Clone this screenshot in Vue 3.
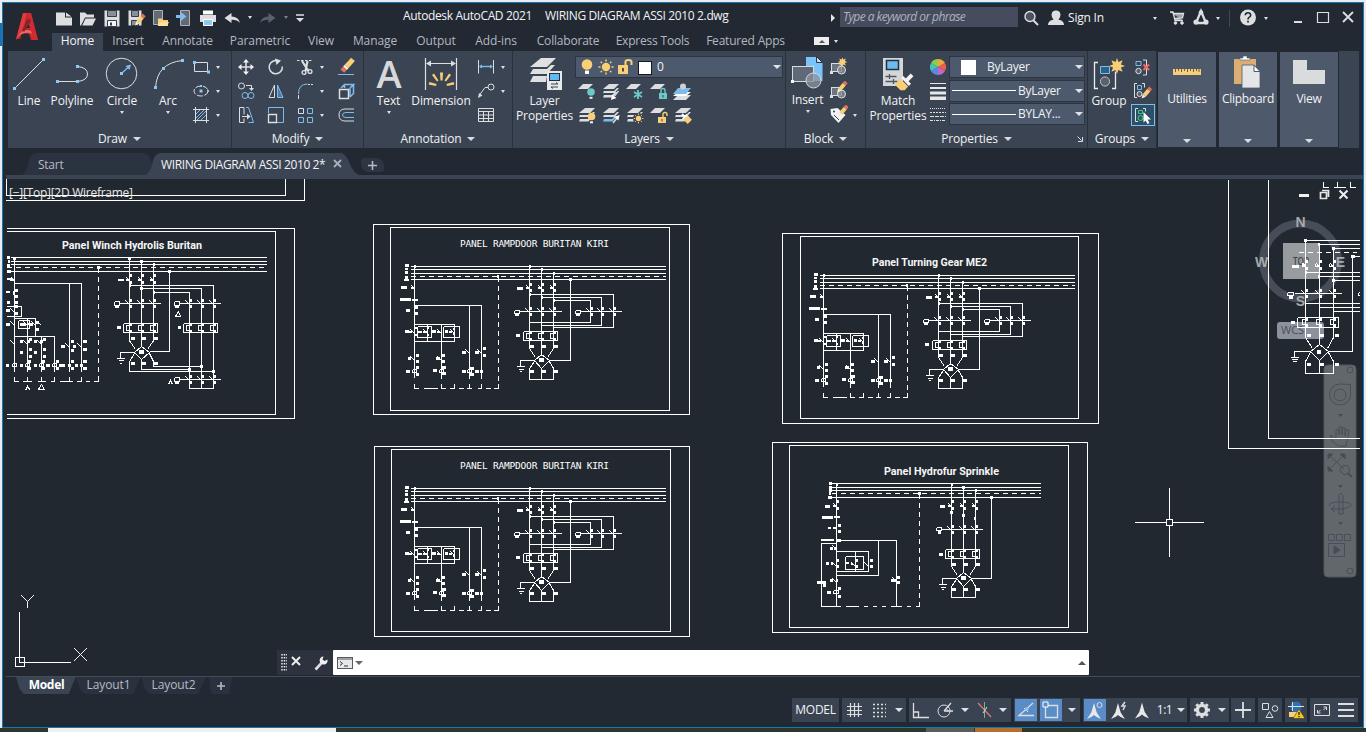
<script setup>
import { h } from 'vue'

const W = '#dcdee0'
const B = '#7cbdee'
const Y = '#f8cf76'
const dot = (x, y, s = 3) => `<rect x="${x - s / 2}" y="${y - s / 2}" width="${s}" height="${s}" fill="#8cc8f2" stroke="none"/>`
const slab = (x, y, f = W, w = 10, hh = 4) => `<path d="M${x + 5} ${y}h${w - 3}l-5 ${hh}h-${w - 3}z" fill="${f}" stroke="none"/>`
const sheets = (f1 = W, f2 = W, f3 = W) => `<g stroke="none"><path d="M8 2h10l-5 5H2z" fill="${f1}"/><path d="M3 9h10l3-3h2l-4.500 5H2z" fill="${f2}"/><path d="M3 13h8l3-3h2l-4.500 5.500H2z" fill="${f3}"/></g>`
const pencil = (x, y) => `<g transform="translate(${x} ${y}) rotate(40)" stroke="none"><rect x="-2" y="-8" width="4" height="3" fill="#e4705c"/><rect x="-2" y="-5" width="4" height="7" fill="${Y}"/><path d="M-2 2h4l-2 4z" fill="#f4eee0"/></g>`
const star = (x, y, s = 1) => `<path transform="translate(${x} ${y}) scale(${s})" d="M0-8l1.400 4 4.200-1.800L3.900-1.500 8 0 3.900 1.500 5.600 5.800 1.400 4 0 8-1.400 4-5.600 5.800-3.900 1.500-8 0-3.900-1.500-5.600-5.800-1.400-4z" fill="${Y}" stroke="none"/>`
const lockIcon = (x, y, f, open) => `<rect x="${x}" y="${y}" width="8" height="6" fill="${f}" stroke="none"/><path d="M${open ? x + 5 : x + 2} ${y}v-2.500q0-2 2-2t2 2v${open ? 1.5 : 2.5}" stroke="${f}" stroke-width="1.400"/><path d="M${x + 4} ${y + 2}v2.500" stroke="#3b4453"/>`
const bulb = (x, y, f) => `<circle cx="${x}" cy="${y}" r="3.800" fill="${f}" stroke="none"/><path d="M${x - 1.5} ${y + 4.8}h3v2h-3z" fill="#eee" stroke="none"/>`
const sun = (x, y, s = 1) => `<g transform="translate(${x} ${y}) scale(${s})" stroke="${Y}"><circle r="4.200" fill="${Y}" stroke="none"/><path stroke-width="1.500" d="M0-7.500v2M0 5.500v2M-7.500 0h2M5.500 0h2M-5.300-5.300l1.300 1.300M4 4l1.300 1.300M-5.300 5.300l1.300-1.300M4-4l1.300-1.300"/></g>`
const blk = `<rect x="3.500" y="6.500" width="10" height="8" fill="#6d7580"/><circle cx="13.500" cy="13" r="4" fill="#858c95" fill-opacity=".8"/><path d="M2 14h3v3h-3z" fill="${W}" stroke="none"/>`
const needle = `<path d="M0-8l2.700 9.500 4.300 6.500-4.800-2.200L0 4l-2.200 1.800L-7 8l4.300-6.500z" fill="#e6e8ea" stroke="none"/>`

const icons = {
  logo: [26, 32, `<g stroke="none"><path d="M9 3h8l7 27h-7l-2-6-7-1-2 6H2z" fill="#b52b30"/><path d="M9 3h4l-5 20-6 7z" fill="#e0393e"/><path d="M13 3h4l7 27h-6z" fill="#d12a32"/><path d="M13 10l3 8h-6z" fill="#222933"/><path d="M5 25q5-7 12-4l1 3q-8-4-16 5z" fill="#ee6a62"/><path d="M8 20l7-12 2 3-7 11z" fill="#8b2428"/></g>`],
  newf: [20, 20, `<path d="M2 4.500h9v5h7v8H2zM12 4.500l5.500 4h-5.500z" fill="${W}" stroke="none"/>`],
  open: [20, 20, `<path d="M2 4.500h5l2 2h7v3H7l-4 8H2zM7.500 10.500H18l-3.500 7H4.200z" fill="${W}" stroke="none"/>`],
  save: [20, 20, `<path d="M2.500 2.500h15v16h-15z" fill="${W}" stroke="none"/><path d="M5.500 2.500h9v6h-9z" fill="#8a8f96" stroke="#333b48"/><path d="M5.500 12.500h9v6h-9z" fill="#f4f4f4" stroke="#333b48"/><path d="M9 14.500v3" stroke="#333b48" stroke-width="2"/>`],
  saveas: [20, 20, `<path d="M2.500 2.500h13v15h-13z" fill="${W}" stroke="none"/><path d="M5.500 2.500h7v6h-7zM5.500 12.500h7v5h-7z" fill="#8a8f96" stroke="#333b48"/>` + pencil(13, 13)],
  mopen: [20, 20, `<path d="M3.500 2.500h9v14h-9z" fill="#626a75" stroke="#aeb2b8"/><path d="M8 10.500h4l1 1.500h5v6H8z" fill="${Y}" stroke="none"/><path d="M10 14h9l-2 4H8z" fill="#ffe0a0" stroke="none"/>`],
  msave: [20, 20, `<path d="M6.500 2.500h9v15h-9z" fill="#626a75" stroke="#aeb2b8"/><path d="M2 7h5V4l5.500 4.500L7 13v-3H2z" fill="${B}" stroke="none"/>`],
  print: [20, 20, `<path d="M5 2.500h10v4H5z" fill="#fff" stroke="none"/><path d="M2 7h16v7H2z" fill="${W}" stroke="none"/><path d="M5.500 11.500h9v6h-9z" fill="#8cc8f2" stroke="#fff"/>`],
  undo: [20, 20, `<path d="M2.500 10l7-5v3.500q7 0 8.500 6.500-3-3.500-8.500-3.200V15z" fill="${W}" stroke="none"/>`],
  redo: [20, 20, `<path d="M17.500 10l-7-5v3.500q-7 0-8.500 6.500 3-3.500 8.500-3.200V15z" fill="#59616d" stroke="none"/>`],
  more: [12, 12, `<path d="M2 3h8" stroke-width="1.500"/><path d="M2 6h8l-4 4z" fill="${W}" stroke="none"/>`],
  find: [20, 20, `<circle cx="9" cy="8.500" r="5" fill="#4a5360" stroke-width="1.400"/><path d="M12.500 12.500l4.500 4.500" stroke-width="2"/>`],
  user: [20, 20, `<path d="M2 17q0-4.500 5.500-5.200Q5.500 9.500 5.500 6.500 6 2.500 10 2.500t4.500 4q0 3-2 5.300Q18 12.500 18 17z" fill="${W}" stroke="none"/>`],
  cart: [20, 20, `<path d="M3 4h3l2 8.500h8M6.500 5.500h10l-1 4.500-8 .5z" fill="#9aa0a8" stroke-width="1.300"/><circle cx="8.500" cy="15" r="1.300" fill="${W}"/><circle cx="15" cy="15" r="1.300" fill="${W}"/>`],
  adsk: [20, 20, `<path d="M10 3L5 15h10z" stroke-width="2.300"/><circle cx="10" cy="4.500" r="2.300" fill="${W}" stroke="none"/><circle cx="5" cy="14" r="2.600" fill="${W}" stroke="none"/><circle cx="15" cy="14" r="2.600" fill="${W}" stroke="none"/>`],
  help: [20, 20, `<circle cx="10" cy="9.500" r="8" fill="${W}" stroke="none"/><path d="M7.300 7.300q.2-2.500 2.700-2.500t2.700 2.300q0 1.500-1.600 2.300-1.100.6-1.100 2" stroke="#222933" stroke-width="1.600"/><path d="M9.100 12.700h1.800v1.800H9.100z" fill="#222933" stroke="none"/>`],
  min: [20, 20, `<path d="M6 14h8" stroke-width="2"/>`],
  max: [20, 20, `<path d="M4.500 4.500h11v10h-11z" stroke-width="1.200"/>`],
  close: [20, 20, `<path d="M5 4l10 10M15 4l-10 10" stroke-width="1.800"/>`],
  line: [36, 36, `<path d="M3.500 32.500l29-29"/>` + dot(3.5, 32.5) + dot(32.5, 3.5)],
  pline: [36, 36, `<path d="M3.500 25.500h20q10-1 10-7.500t-10-7.500"/>` + dot(3.5, 25.5) + dot(23.5, 25.5) + dot(23.5, 10.5)],
  circle: [36, 36, `<circle cx="17.500" cy="17.500" r="15.300"/><path d="M18 17l7-6.500" stroke="${B}" stroke-width="1.300"/><path d="M27 8.500l-1.500 5.500-4-4z" fill="${B}" stroke="none"/>` + dot(17.5, 17.5)],
  arc: [36, 36, `<path d="M5.500 32Q7 7 32.500 4.500"/>` + dot(5.5, 31.5) + dot(13.5, 12.5) + dot(32.5, 4.5)],
  rect: [20, 20, `<path d="M3.500 5.500h13v9h-13z"/>` + dot(3.5, 5.5) + dot(17.5, 15, 3)],
  ellipse: [20, 20, `<ellipse cx="10" cy="10" rx="7" ry="5" stroke-dasharray="6 1.500"/>` + dot(10, 10) + dot(17, 10, 2) + dot(10, 5, 2)],
  hatch: [20, 20, `<path d="M5 9l4-4M5 13l8-8M6 15l9-9M10 15l5-5" stroke="${B}"/><path d="M4.500 2v16M15.500 2v16M2 4.500h16M2 15.500h16"/>`],
  move: [20, 20, `<path d="M10 4v12M4 10h12" stroke-width="1.600"/><path d="M10 2l3 3.500H7zM10 18l3-3.500H7zM2 10l3.500-3v6zM18 10l-3.500-3v6z" fill="#f2f2f2" stroke="none"/>`],
  rotate: [20, 20, `<path d="M12.500 4.200A6.600 6.600 0 1 0 16.300 9.500" stroke-width="1.500"/><path d="M9 1.500l6 2-4.500 4.500z" fill="${W}" stroke="none"/>`],
  trim: [20, 20, `<path d="M2 3.500h16" stroke-dasharray="2.500 1.500"/><path d="M7 4l6.500 10M12.500 4l-2 10" stroke-width="2.200"/><circle cx="9" cy="15.500" r="1.900" stroke-width="1.400"/><circle cx="15" cy="14.500" r="1.900" stroke-width="1.400"/>`],
  erase: [20, 20, `<g transform="translate(11 9) rotate(42)" stroke="none"><rect x="-2.500" y="-9" width="5" height="10" fill="${Y}"/><rect x="-2.500" y="1" width="5" height="2" fill="#fff"/><rect x="-2.500" y="3" width="5" height="4" fill="#ee6d61"/></g><path d="M2 17.500h16" stroke="${B}"/>`],
  copy: [20, 20, `<circle cx="5.500" cy="5" r="3"/><path d="M10 4.500h5.500V7"/><path d="M15.500 10l-2.500-3h5z" fill="${W}" stroke="none"/><g stroke="${B}"><circle cx="9" cy="14.500" r="3"/><circle cx="15" cy="14.500" r="3"/></g>`],
  mirror: [20, 20, `<path d="M8.500 4v12.500h-5.500z"/><path d="M11.500 4v12.500H17z" fill="#4f7ba3" stroke="${B}"/>`],
  fillet: [20, 20, `<path d="M3.500 18v-4"/><path d="M3.500 13q0-10 9-10" stroke="${B}"/><path d="M13 3.500h5" stroke-dasharray="2 1"/>`],
  explode: [20, 20, `<path d="M3.500 8.500h9v9h-9z" stroke-width="1.500"/><path d="M5 7l3.500-3.500h9L14 7M17.500 4v8.500L14 16M14 7v9M8.500 4v3" stroke="${B}" stroke-width="1.500"/>`],
  stretch: [20, 20, `<path d="M8 2.500H3.500v15H8M8 2.500v7M8 13.500v4"/><path d="M10 2.500h2.500l5 15h-5" stroke="${B}"/><path d="M6 11.500h6"/><path d="M11 8.500l3.500 3-3.500 3z" fill="${W}" stroke="none"/>`],
  scale: [20, 20, `<path d="M2.500 8V2.500h15v15H11" stroke="${B}"/><path d="M2.500 9.500h8v8h-8z" stroke-width="1.300"/>`],
  array: [20, 20, `<path d="M3.500 3.500h5v5h-5z"/><path d="M12.500 3.500h5v5h-5zM3.500 12.500h5v5h-5zM12.500 12.500h5v5h-5z" stroke="${B}"/>`],
  offset: [20, 20, `<path d="M18 4H9Q3 4 3 10t6 6h9"/><path d="M18 7.500h-8q-3.500 0-3.500 2.500t3.500 2.500h8" stroke="${B}"/>`],
  text: [36, 36, `<text x="18" y="32" text-anchor="middle" font-family="Open Sans, sans-serif" font-weight="600" font-size="38" fill="#d6d8da" stroke="none">A</text>`],
  dim: [36, 36, `<path d="M2.500 2v32M33.500 2v32M4 7.500h28" stroke-width="1.200"/><path d="M3 7.500l5-3v6zM33 7.500l-5-3v6z" fill="${W}" stroke="none"/><path d="M17 16.500h3l-.5 8h-2zM9 19l2-1.500 4.500 7-1.500 1zM28 19l-2-1.500-4.500 7 1.500 1zM5.500 28.500l1-2.500 7 2-.5 2zM31.500 28.500l-1-2.500-7 2 .5 2z" fill="${Y}" stroke="none"/>`],
  dlin: [20, 20, `<path d="M2.500 3v13.500M17.500 3v13.500"/><path d="M4 9.500h12" stroke="${B}" stroke-width="1.400"/><path d="M3 9.500l3-2v4zM17 9.500l-3-2v4z" fill="${B}" stroke="none"/>`],
  leader: [20, 20, `<circle cx="15" cy="6" r="3"/><path d="M12 6.500H9L3.500 14"/><path d="M2 17l1-5 3.500 2.500z" fill="${W}" stroke="none"/>`],
  table: [20, 20, `<path d="M2.500 3.500h15v13h-15zM2.500 6.500h15M2.500 10h15M2.500 13.500h15M7.500 6.500v10M12.500 6.500v10"/>`],
  layerp: [36, 36, `<g fill="#dfe0e1" stroke="none"><path d="M14 2h15l-9 9H3z"/><path d="M6 13h14l4-4h4l-8 9H3zM6 20h14l-1 6H3z"/></g><rect x="20.500" y="15.500" width="14" height="18" fill="#e8e9ea" stroke="#e8e9ea"/><rect x="22.500" y="17.500" width="10" height="7" fill="#62b8f0" stroke="#26303c"/><path d="M24 28h7l-2-1.500M31 31h-7l2 1.500" stroke="#3b4453"/>`],
  bulb: [20, 20, `<circle cx="10" cy="7.500" r="5.300" fill="${Y}" stroke="none"/><path d="M8 13.500h4v3.500H8z" fill="#fff" stroke="none"/>`],
  sun: [20, 20, sun(10, 10)],
  unlock: [20, 20, `<path d="M3 8h10v9H3z" fill="${Y}" stroke="none"/><path d="M10.500 8V4.500q0-1.500 3-1.500t3 2V8" stroke="${Y}" stroke-width="2"/><path d="M8 11v3.500" stroke="#443c28" stroke-width="1.800"/>`],
  l1: [20, 20, slab(1, 2, W, 13, 5) + bulb(14, 10, '#6cc9c4')],
  l2: [20, 20, sheets() + `<path d="M17.500 9l-4 5" stroke-width="1.400"/><path d="M10 18l1-5.500 4.500 3.500z" fill="#fff" stroke="none"/>`],
  l3: [20, 20, slab(1, 2, W, 13, 5) + `<path d="M13 8v9M9 10l8 5M17 10l-8 5" stroke="#6cc9c4" stroke-width="1.800"/>`],
  l4: [20, 20, slab(1, 2, W, 13, 5) + lockIcon(10, 11, '#6cc9c4')],
  l5: [20, 20, slab(0, 13, W, 16, 5) + slab(0, 10, '#fff', 16, 4) + slab(0, 6, B, 16, 6) + `<circle cx="10" cy="4.500" r="3" fill="#cfd1d3" stroke="none"/>`],
  l6: [20, 20, sheets() + bulb(14.5, 10.5, Y)],
  l7: [20, 20, sheets(W, W, B) + `<path d="M12 17l4-5" stroke-width="1.400"/><path d="M18.500 9l-1 5.500-4.500-3.500z" fill="#fff" stroke="none"/>`],
  l8: [20, 20, sheets() + `<circle cx="13.500" cy="12.500" r="5.500" fill="#3b4453" stroke="none"/>` + sun(13.5, 12.5, 0.65)],
  l9: [20, 20, slab(1, 2, W, 13, 5) + lockIcon(9, 11, Y, true)],
  l10: [20, 20, sheets() + `<g transform="translate(14 13) rotate(-45)" stroke="none"><rect x="-3" y="-2" width="6" height="6" fill="${Y}"/><rect x="-3" y="-4" width="6" height="2" fill="#fff"/><rect x="-1" y="-7" width="2" height="4" fill="#fff"/></g>`],
  insert: [36, 36, `<path d="M16 1h10l6.500 6v18H16z" fill="#7cc4f8" stroke="none"/><path d="M26.500 .5v6h6z" fill="#bfe2fb" stroke="#2b3340"/><rect x="2.500" y="10.500" width="21" height="15" fill="#606978" stroke="#d8dadd"/><circle cx="23.500" cy="24.500" r="7.500" fill="#8c939d" fill-opacity=".75" stroke="#d8dadd"/><path d="M1 24h3v3H1z" fill="#fff" stroke="none"/>`],
  bcreate: [20, 20, blk + star(14.5, 5, 0.6)],
  bedit: [20, 20, blk + pencil(13, 7)],
  battr: [20, 20, `<path d="M2.500 4l7-1 8 7-7 8-7.500-8z" fill="#f2f2f2" stroke="none"/><circle cx="6" cy="6.500" r="1" fill="#3b4453" stroke="none"/><path d="M6 10l5 5" stroke="#3b4453"/>` + pencil(14, 7)],
  match: [36, 36, `<path d="M3 2h20v28H3z" fill="#d5d6d8" stroke="none"/><path d="M6.500 4.500h12v9h-12z" fill="#6cbcf4" stroke="#26303c" stroke-width="1.500"/><path d="M5.500 20.500h11M5.500 25.500h12M9.500 18v5M13.500 23v5" stroke="#505762" stroke-width="1.300"/><g transform="translate(25 26) rotate(45)" stroke="none"><rect x="-5.500" y="-3" width="11" height="3" fill="#f4f4f4"/><rect x="-2" y="-10" width="4" height="8" fill="#f4f4f4"/><path d="M-5.500 1h11v5l-3 3h-8z" fill="${Y}"/></g>`],
  wheel: [20, 20, [['#f0a63c', 0], ['#e9604e', 60], ['#c765c0', 120], ['#5e85e8', 180], ['#45c5b5', 240], ['#8fca55', 300]].map(([f, a]) => `<path transform="rotate(${a} 10 10)" d="M10 10V2A8 8 0 0 1 16.930 6z" fill="${f}" stroke="none"/>`).join('')],
  lw: [20, 20, `<g stroke="none" fill="#e6e7e8"><path d="M2 2h16v1H2zM2 6h16v2H2zM2 10.500h16v3H2zM2 15.500h16v3.500H2z"/></g>`],
  lt: [20, 20, `<path d="M2 3.500h16" stroke-dasharray="1 1"/><path d="M2 7.500h16" stroke-dasharray="2 1"/><path d="M2 11.500h16" stroke-dasharray="4 1"/><path d="M2 15.500h16" stroke-dasharray="3 1 1 1"/>`],
  group: [36, 36, `<path d="M7 6.500H3.500v26H7M21 32.500h3.500v-17" stroke="#e8eaec" stroke-width="1.300"/><path d="M9.500 10.500h9v7h-9z" fill="#2d6286" stroke="${B}"/><circle cx="14" cy="25.500" r="4.600" fill="#59616d" stroke="#bfc3c8"/>` + star(26, 10)],
  ungroup: [20, 20, `<path d="M10 3h3.500v15H10"/><path d="M3 4.500h5v4H3z" stroke="${B}"/><circle cx="5.500" cy="14" r="2.700" fill="#59616d"/><path d="M10.500 7.500L16 13M16 7.500L10.500 13" stroke="#f06a66" stroke-width="2"/>`],
  gedit: [20, 20, `<path d="M4 2.500H1.500v14H4M9 2.500h2.500v4"/><path d="M4.500 4.500h4v4h-4z" stroke="${B}"/><circle cx="6.500" cy="13" r="2.500" fill="#59616d"/>` + pencil(12.5, 13)],
  gsel: [20, 20, `<path d="M5 3.500H2.500v13H5M10 3.500h2.500v3"/><path d="M5.500 5.500h4v3h-4z" stroke="#4cc38a"/><circle cx="7.500" cy="13" r="2.500" stroke="#4cc38a" fill="#22664e"/><path d="M10.500 7l7.500 7.500h-3.500l2 3.500-2 1-1.800-3.500-2.200 2z" fill="#fff" stroke="none"/>`],
  util: [36, 36, `<path d="M4 15h28v6H4z" fill="${Y}" stroke="none"/><path d="M6.500 15v3M9.500 15v2M12.500 15v3M15.500 15v2M18.500 15v3M21.500 15v2M24.500 15v3M27.500 15v2M30 15v3" stroke="#5b5340" stroke-width=".9"/>`],
  clip: [36, 36, `<path d="M4 5h22v25H4z" fill="#dcae73" stroke="none"/><path d="M10 6V4h3V2h4v2h3v2z" fill="#fff" stroke="#4e5a6c" stroke-width=".6"/><path d="M12 11h12l6 6v17H12z" fill="#e4e5e6" stroke="#4e5a6c" stroke-width=".8"/><path d="M24 11l6 6.500h-6z" fill="#fff" stroke="#4e5a6c"/>`],
  view: [36, 36, `<path d="M2 6h14v10h18v14H2z" fill="#dadbdd" stroke="none"/>`],
  launch: [8, 8, `<path d="M1.500 1.500l4 4M6.500 2v4.500H2"/>`],
  grid: [20, 20, `<path d="M6.500 3v14M10.500 3v14M14.500 3v14M3 6.500h15M3 10.500h15M3 14.500h15" stroke-width="1.200"/>`],
  snap: [20, 20, `<path d="M4 4.500h13M4 8.500h13M4 12.500h13M4 16.500h13" stroke-dasharray="2 2" stroke-width="1.700"/>`],
  ortho: [20, 20, `<path d="M2.500 3v14.500H18M2.500 12h5v5" stroke-width="1.300"/>`],
  polar: [20, 20, `<circle cx="9" cy="11" r="6"/><path d="M9 11h9M9 11l7-8" stroke-width="1.300"/><path d="M11 8.500q2 1 1.500 3"/>`],
  iso: [20, 20, `<path d="M4 3l13 14" stroke="#e07a7a" stroke-width="1.200"/><path d="M10.500 2v16" stroke="#74b884"/><path d="M9 13l4-6"/>`],
  track: [20, 20, `<path d="M17 3L3 15.500h15" stroke-width="1.300"/><path d="M8 8l4 4" />` + dot(11, 9, 3)],
  osnap: [20, 20, `<path d="M4.500 5.500h12v12h-12z" stroke-width="1.300"/><path d="M2 2h5v5H2z" fill="#5a8cc8" stroke="#fff"/>`],
  ann1: [20, 20, `<g transform="translate(9 11)">${needle}</g><circle cx="14.500" cy="5" r="2.500"/>`],
  ann2: [20, 20, `<g transform="translate(9 11)">${needle}</g><path d="M16 2l-3 4h3l-2 4" stroke-width="1.500"/>`],
  ann3: [20, 20, `<g transform="translate(10 10.500)">${needle}</g>`],
  gear: [20, 20, `<circle cx="10" cy="10" r="4.600" stroke-width="3.400"/><path d="M10 2v3M10 15v3M2 10h3M15 10h3M4.300 4.300l2 2M13.700 13.700l2 2M4.300 15.700l2-2M13.700 6.300l2-2" stroke-width="3"/>`],
  plus: [20, 20, `<path d="M10 2v16M2 10h16" stroke-width="1.800"/>`],
  iso2: [20, 20, `<path d="M2.500 3.500h6v6h-6zM9.500 11.500l3.500 6H6z"/><circle cx="15" cy="8.500" r="2.800"/>`],
  hw: [20, 20, `<circle cx="10" cy="7" r="5.500" fill="#2f6fb4" stroke="none"/><path d="M2 6.500h16M6.500 2v9" stroke-width="1"/><path d="M3 12h9v5H3z" fill="${Y}" stroke="none"/><path d="M13 9l6 9.500H7z" fill="#f6c51e" stroke="#22282f" stroke-width=".5"/><path d="M13 12v3M13 16v1.300" stroke="#222" stroke-width="1.300"/>`],
  full: [20, 20, `<path d="M2.500 4.500h15v11h-15z"/><path d="M6 12.500l2.500-2.500M14 7.500L11.500 10M5.500 10v3h3M14.500 10V7h-3"/>`],
  menu: [20, 20, `<path d="M2 4h16M2 10h16M2 16h16" stroke-width="2"/>`],
  wrench: [16, 16, `<path d="M2.500 14.500l7-7.500" stroke-width="2.600"/><path d="M14.500 4.500a4 4 0 1 1-4-3l-1 3 2 1.500z" fill="#f0f0f0" stroke="none"/>`],
  cmd: [16, 14, `<rect x=".500" y="1.500" width="15" height="11" fill="#e6e7e9" stroke="#555b63"/><path d="M.500 3h15" stroke="#555b63"/><path d="M3 5.500l2.500 2L3 9.500M7 10h4" stroke="#333"/>`],
}

const Ic = (p) => {
  const [w, ht, m] = icons[p.n]
  return h('svg', { width: w, height: ht, viewBox: `0 0 ${w} ${ht}`, fill: 'none', stroke: W, 'stroke-width': 1, innerHTML: m })
}
Ic.props = ['n']

const quick = ['newf', 'open', 'save', 'saveas', 'mopen', 'msave', 'print', 'undo']
const tabs = ['Home', 'Insert', 'Annotate', 'Parametric', 'View', 'Manage', 'Output', 'Add-ins', 'Collaborate', 'Express Tools', 'Featured Apps']
const drawBig = [['Line', 'line'], ['Polyline', 'pline'], ['Circle', 'circle', 1], ['Arc', 'arc', 1]]
const modify = [['move'], ['rotate'], ['trim', 1], ['erase'], ['copy'], ['mirror'], ['fillet', 1], ['explode'], ['stretch'], ['scale'], ['array', 1], ['offset']]
const slim = [['Utilities', 'util'], ['Clipboard', 'clip'], ['View', 'view']]

/* Schematic geometry is listed on a grid of thirds of a drawing unit. */
const nums = (s) => s.split(';').map((q) => q.trim().split(/\s+/).map(Number)).filter((q) => q.length > 1)
const snapTo = (v, o) => Math.floor(v / 3) + o + 0.5
const wires = (s, ox, oy) => nums(s).map((q) => {
  let d = ''
  for (let i = 0; i < q.length; i += 2) d += (i ? 'L' : 'M') + snapTo(q[i], ox) + ' ' + snapTo(q[i + 1], oy)
  return d
}).join('')
const blobs = (s, ox, oy) => nums(s).map(([x, y, w = 12, k = 9]) => {
  const bw = Math.max(1, Math.round(w / 3))
  const bh = Math.max(1, Math.round(k / 3))
  return `M${Math.round((x - w / 2) / 3) + ox} ${Math.round((y - k / 2) / 3) + oy}h${bw}v${bh}h-${bw}z`
}).join('')
const box = (x, y, x2, y2) => `${x} ${y} ${x2} ${y} ${x2} ${y2} ${x} ${y2} ${x} ${y};`
const thermal = (xs, y) => xs.map((x) => `${x + 6} ${y} ${x - 9} ${y} ${x - 9} ${y + 15} ${x + 6} ${y + 15};`).join('')
const contacts = (xs, y) => xs.map((x) => `${x - 12} ${y - 9} ${x} ${y + 3};`).join('')
const marks = (xs, y) => xs.map((x) => `${x + 5} ${y - 10} 6 8;${x + 5} ${y + 10} 6 8;`).join('')
const breaker = (xs, y) => xs.map((x) => `${x - 9} ${y - 6} ${x} ${y + 6};${x - 14} ${y + 3} ${x - 8} ${y - 4} ${x - 2} ${y + 3} ${x - 14} ${y + 3};`).join('')
const motor = (x, y) => `${x - 36} ${y - 36} ${x - 18} ${y - 8};${x + 36} ${y - 36} ${x + 18} ${y - 8};${x} ${y - 18} ${x + 22} ${y} ${x} ${y + 23} ${x - 22} ${y} ${x} ${y - 18};${x - 22} ${y} ${x - 63} ${y} ${x - 63} ${y + 18};${x - 75} ${y + 18} ${x - 51} ${y + 18};${x - 70} ${y + 26} ${x - 56} ${y + 26};${x - 66} ${y + 33} ${x - 60} ${y + 33};`
const motorFoot = (x, y) => `${x - 22} ${y + 3} ${x - 36} ${y + 24} ${x - 36} ${y + 57} ${x + 36} ${y + 57} ${x + 36} ${y + 24} ${x + 22} ${y + 3};${x} ${y + 23} ${x} ${y + 57};`
const motorMarks = (x, y) => `${x} ${y} 14 13;${x - 29} ${y - 42};${x + 7} ${y - 42};${x + 42} ${y - 42};${x - 29} ${y + 33};${x + 7} ${y + 33};${x + 42} ${y + 33};`

const ramp = {
  l: '135 154 902 154;135 163 902 163;135 175 902 175;135 193 902 193;149 154 149 488;149 271 350 271 350 490;313 271 313 490;149 328 268 328 268 380 149 380;188 328 188 380;230 328 230 490;149 504 149 520 161 520;175 520 216 520;230 504 230 520 240 520;254 520 268 520 268 504;280 520 295 520;305 520 320 520;313 504 313 520;337 520 350 520 350 504;362 520 375 520;386 520 401 520 401 505;'
    + box(158, 334, 200, 367) + box(236, 334, 284, 367)
    + '494 154 494 400;530 163 530 420;566 175 566 400;616 193 616 436 552 436;494 238 746 238 746 337 566 337;530 247 709 247 709 331 530 331;566 256 676 256 676 322 494 322;463 289 588 289;645 289 768 289;'
    + box(448, 286, 463, 295) + box(631, 286, 645, 295) + box(476, 349, 578, 376)
    + contacts([494, 530, 566, 676, 709, 746], 289) + breaker([494, 530, 566, 149], 217) + thermal([494, 530, 566], 355) + contacts([149, 188, 230, 268], 353) + contacts([313, 350], 412) + contacts([149, 230], 434) + box(143, 464, 155, 473) + box(224, 464, 236, 473) + box(308, 464, 319, 473)
    + motor(530, 436) + motorFoot(530, 436),
  d: '135 184 902 184;400 184 400 505',
  b: '126 152 12 9;124 162 8 7;124 172 8 8;125 187 8 8;125 194 14 7;149 154 7;400 184 7;494 154 7;530 163 7;566 174 7;616 193 9;494 238 7;530 247 7;566 257 7;117 217 18 9;120 254 33 9;149 256 18 6;155 277 9 9;130 286 13 8;155 295 9 9;125 350 11 9;163 350 11 7;179 350 11 6;205 350 11 9;219 350 8 6;244 350 10 9;258 350 10 6;137 350 8 6;152 340 8 6;152 360 8 6;188 340 7 6;188 360 7 6;268 342 7 6;268 358 7 6;134 430 10;157 420 10;157 438 10;130 469 13;157 458 10;157 479 10;218 430 11;236 420 9;236 438 9;210 466 12;236 458 12;236 476 12;297 411 12;336 411 12;359 400 9;359 421 9;297 469 12;321 459 11;321 479 11;336 469 12;350 469 9;465 219 18 9;456 299 12;638 299 12;459 361 12;' + marks([494, 530, 566, 676, 709, 746], 289) + marks([494, 530, 566], 217) + marks([494, 530, 566], 363) + motorMarks(530, 436),
}
const hydro = {
  l: '200 145 825 145;200 157 825 157;200 166 825 166;200 187 825 187;215 145 215 514;215 316 395 316 395 514;170 514 170 325 215 325;341 316 341 421 215 421;215 349 311 349 311 410 215 410;272 349 272 410;170 514 227 514;241 514 281 514;295 514 308 514;323 514 335 514;349 514 362 514;376 514 408 514;423 514 435 514;450 514 464 514 464 500;'
    + box(241, 364, 296, 403) + contacts([215, 272, 311], 390) + contacts([215], 440) + contacts([215], 340) + contacts([395], 436) + box(206, 465, 221, 474) + breaker([215, 560, 596, 632], 212)
    + '560 145 560 394;596 157 596 412;632 166 632 394;680 187 680 430 618 430;528 283 653 283;' + box(514, 277, 529, 287) + box(541, 343, 644, 370) + contacts([560, 596, 632], 283) + thermal([560, 596, 632], 349) + motor(596, 430) + motorFoot(596, 430),
  d: '200 175 825 175;464 175 464 505',
  b: '196 145 8;196 157 8;196 166 8;194 175 5;195 187 12;215 148 7;464 176 8;560 148 7;596 156 8;632 166 7;680 187 9;560 232 8;596 241 8;630 251 5;188 214 15;187 247 34 8;215 247 18 6;194 280 10 6;208 280 9 6;222 271 8;222 289 8;187 315 40 6;222 316 12 9;198 340 8;209 340 6;187 385 9;200 385 6;219 376 6;219 394 6;247 385 10 6;262 385 7 5;275 375 6;275 393 6;320 375 9;320 393 9;170 442 26 8;178 452 10;164 443 12;198 437 9;216 437 7;193 472 12;222 460 8;222 483 8;384 435 15;400 428 9;400 443 9;533 214 16;523 293 10;528 358 12;' + marks([560, 596, 632], 283) + marks([560, 596, 632, 215], 209) + marks([560, 596, 632], 356) + motorMarks(596, 430),
}
const winch = {
  l: '18 41 884 41 884 610 18 610;18 49 827 49 827 598 18 598;30 128 798 128;30 139 798 139;30 148 798 148;30 169 798 169;43 128 43 470;43 205 244 205 244 470;208 205 208 470;18 274 64 274 64 304 18 304;43 310 107 310 107 364;43 364 164 364 164 470;82 310 82 470;125 364 125 470;43 484 43 499 55 499;68 499 95 499;82 484 82 499;112 499 136 499;125 484 125 499;150 499 164 499 164 484;178 499 218 499;208 484 208 499;230 499 244 499 244 484;256 499 269 499;280 499 294 499 294 485;'
    + box(55, 316, 88, 340) + contacts([43, 82, 107, 125], 328) + contacts([43, 82, 125], 385) + contacts([208, 244], 393) + contacts([43], 290) + breaker([43, 389, 425, 461], 193)
    + '389 128 389 378;425 139 425 392;461 148 461 378;508 169 508 409 447 409;389 211 641 211 641 520 569 520 569 232 461 232;425 220 605 220 605 520;357 265 482 265;537 265 662 265;537 493 662 493;'
    + box(343, 259, 358, 270) + box(523, 259, 538, 270) + box(523, 488, 538, 498) + box(371, 325, 473, 352) + box(551, 325, 653, 352) + thermal([389, 425, 461, 569, 605, 641], 331) + contacts([389, 425, 461, 569, 605, 641], 265) + contacts([569, 605, 641], 493) + motor(425, 411)
    + '403 415 389 438 389 469 641 469;425 433 425 463 569 463;447 415 461 438 461 455 605 455;534 290 526 304 542 304 534 290;124 507 116 522 132 522 124 507;83 507 83 515 77 525;83 515 90 525;511 489 511 497 505 507;511 497 517 507;' + [43, 82, 125, 164].map((x) => box(x - 6, 445, x + 6, 454)).join(''),
  d: '18 157 798 157;295 157 295 485',
  b: '26 128 9;26 139 6 8;25 152 10 8;26 169 12;43 130 8;389 130 8;425 139 8;461 148 5;508 169 8;295 158 8;30 193 18 7;24 232 12 6;50 225 9;50 244 9;43 234 7 12;25 263 10;24 286 12;48 263 8;48 275 8;48 295 8;24 328 12;68 328 17 9;84 328 9 6;96 328 10;111 322 9;111 343 9;65 380 9;84 380 9;92 373 9;107 380 9;125 380 9;132 373 9;66 411 10;92 402 8;106 411 10;132 402 8;92 425 8;132 425 8;22 450 9;66 450 10;88 438 8;88 460 8;105 450 9;131 438 8;131 460 8;143 450 12;182 450 12;171 438 9;171 460 9;190 393 12;218 378 9;218 405 9;225 393 10;253 378 11;253 402 11;190 450 12;208 450 10;218 438 8;218 460 8;230 450 10;244 450 9;255 438 11;255 460 11;389 211 7;425 220 8;461 232 7;605 455 8;569 463 8;641 469 8;363 194 18 6;351 273 12;531 273 12;531 502 12;357 338 12;538 338 10;' + marks([389, 425, 461, 569, 605, 641], 265) + marks([569, 605, 641], 493) + marks([389, 425, 461], 191) + marks([389, 425, 461, 569, 605, 641], 338)
    + '425 411 14 12;398 370;432 370;468 370;398 445;432 445;468 445;',
}
const right = {
  l: '326 12 326 265 326 820 720 820;445 12 445 790 720 790;557 196 720 196;598 208 720 208;640 220 720 220;557 196 557 488;598 208 598 507;640 220 640 488;698 243 698 529 622 529;698 243 720 243;557 292 720 292;598 304 720 304;640 316 720 316;523 355 665 355;557 385 720 385;598 397 720 397;640 409 720 409;557 488 578 519;640 488 622 519;598 507 624 529 598 556 572 529 598 507;572 529 523 529 523 546;511 546 536 546;515 553 532 553;518 560 528 560;572 533 557 560 557 595 641 595 641 560 624 533;598 556 598 595;610 18 610 36 625 36;652 18 652 36;640 36 675 36;691 18 691 36 705 36;'
    + box(502, 352, 521, 361) + box(715, 352, 730, 361) + box(532, 427, 656, 457) + thermal([557, 598, 640], 433) + contacts([557, 598, 640], 355) + breaker([557, 598, 640], 270),
  d: '535 232 710 232',
  b: '557 197 9;598 208 7;640 220 8;698 243 11;557 292 7;598 304 7;640 316 10;512 368 13;519 441 12;525 275 20;598 530 13 12;567 480;606 480;650 480;567 568;606 568;650 568;' + marks([557, 598, 640], 355) + marks([557, 598, 640], 270) + marks([557, 598, 640], 442),
}
const make = (g, ox, oy) => ({ l: wires(g.l, ox, oy), d: wires(g.d, ox, oy), b: blobs(g.b, ox, oy) })
const drawings = [make(ramp, 365, 215), make(ramp, 365, 437), make(ramp, 774, 224), make(hydro, 765, 435), make(winch, 0, 215), make(right, 1120, 175)]
const frames = [[373, 224, 316, 190], [390, 227, 279, 183], [374, 446, 315, 190], [391, 449, 279, 182], [782, 233, 316, 190], [800, 236, 278, 182], [772, 442, 315, 190], [789, 445, 279, 182]]
</script>

<template>
  <div class="desktop">
    <div class="window">
      <header class="head">
        <div class="logo"><Ic n="logo" /></div>
        <div class="headrows">
          <div class="title">
            <div class="quick">
              <i v-for="q in quick" :key="q" class="c24"><Ic :n="q" /></i>
              <i class="c12"><b class="ar" /></i><i class="c24"><Ic n="redo" /></i><i class="c12"><b class="ar dim" /></i><i class="c16"><Ic n="more" /></i>
            </div>
            <div class="name"><span>Autodesk AutoCAD 2021</span><span>WIRING DIAGRAM ASSI 2010 2.dwg</span></div>
            <i class="c9"><b class="play" /></i>
            <div class="search">Type a keyword or phrase</div>
            <i class="c26"><Ic n="find" /></i><i class="c24"><Ic n="user" /></i>
            <span class="sign">Sign In</span>
            <i class="c12"><b class="ar" /></i><i class="c24 cart"><Ic n="cart" /></i><i class="c24"><Ic n="adsk" /></i><i class="c9"><b class="ar" /></i>
            <i class="c14"><b class="sep" /></i><i class="c24"><Ic n="help" /></i><i class="c12"><b class="ar" /></i>
            <i class="c24 wmin"><Ic n="min" /></i><i class="c25"><Ic n="max" /></i><i class="c25"><Ic n="close" /></i>
          </div>
          <nav class="tabs">
            <span v-for="(t, i) in tabs" :key="t" :class="{ on: i === 0 }">{{ t }}</span>
            <i class="mini"><b class="box"><b class="up" /></b><b class="ar" /></i>
          </nav>
        </div>
      </header>

      <section class="ribbon">
        <div class="panel draw">
          <div class="body">
            <div v-for="b in drawBig" :key="b[0]" class="big"><Ic :n="b[1]" /><span>{{ b[0] }}</span><b v-if="b[2]" class="ar" /></div>
            <div class="smalls"><i v-for="s in ['rect', 'ellipse', 'hatch']" :key="s"><Ic :n="s" /><b class="ar" /></i></div>
          </div>
          <footer>Draw<b class="tri" /></footer>
        </div>
        <div class="panel modify">
          <div class="body"><i v-for="m in modify" :key="m[0]"><Ic :n="m[0]" /><b v-if="m[1]" class="ar" /></i></div>
          <footer>Modify<b class="tri" /></footer>
        </div>
        <div class="panel annot">
          <div class="body">
            <div class="big"><Ic n="text" /><span>Text</span><b class="ar" /></div>
            <div class="big"><Ic n="dim" /><span>Dimension</span></div>
            <div class="smalls"><i><Ic n="dlin" /><b class="ar" /></i><i><Ic n="leader" /><b class="ar" /></i><i><Ic n="table" /></i></div>
          </div>
          <footer>Annotation<b class="tri" /></footer>
        </div>
        <div class="panel layers">
          <div class="body">
            <div class="big"><Ic n="layerp" /><span>Layer<br>Properties</span></div>
            <div class="lay">
              <div class="combo"><Ic n="bulb" /><Ic n="sun" /><Ic n="unlock" /><b class="sw" /><span>0</span><b class="ar l" /></div>
              <div class="lgrid"><Ic v-for="k in 10" :key="k" :n="'l' + k" /></div>
            </div>
          </div>
          <footer>Layers<b class="tri" /></footer>
        </div>
        <div class="panel block">
          <div class="body">
            <div class="big"><Ic n="insert" /><span>Insert</span><b class="ar" /></div>
            <div class="smalls"><i><Ic n="bcreate" /></i><i><Ic n="bedit" /></i><i><Ic n="battr" /><b class="ar" /></i></div>
          </div>
          <footer>Block<b class="tri" /></footer>
        </div>
        <div class="panel props">
          <div class="body">
            <div class="big"><Ic n="match" /><span>Match<br>Properties</span></div>
            <div class="smalls"><i><Ic n="wheel" /></i><i><Ic n="lw" /></i><i><Ic n="lt" /></i></div>
            <div class="combos">
              <div class="combo"><b class="swatch" /><span>ByLayer</span><b class="ar l" /></div>
              <div class="combo"><b class="rule" /><span>ByLayer</span><b class="ar l" /></div>
              <div class="combo"><b class="rule" /><span>BYLAY...</span><b class="ar l" /></div>
            </div>
          </div>
          <footer>Properties<b class="tri" /><Ic n="launch" class="launch" /></footer>
        </div>
        <div class="panel groups">
          <div class="body">
            <div class="big"><Ic n="group" /><span>Group</span></div>
            <div class="smalls"><i><Ic n="ungroup" /></i><i><Ic n="gedit" /></i><i class="sel"><Ic n="gsel" /></i></div>
          </div>
          <footer>Groups<b class="tri" /></footer>
        </div>
        <div v-for="s in slim" :key="s[0]" class="slim"><Ic :n="s[1]" /><span>{{ s[0] }}</span><b class="tri" /></div>
        <div class="rest" />
      </section>

      <div class="files">
        <div class="ftab">Start</div>
        <div class="ftab on"><span>WIRING DIAGRAM ASSI 2010 2*</span><svg width="9" height="9" viewBox="0 0 9 9" stroke="#a9afb9" stroke-width="1.800"><path d="M1 1l7 7M8 1L1 8" /></svg></div>
        <div class="fadd"><svg width="9" height="9" viewBox="0 0 9 9" stroke="#b4bac3" stroke-width="1.600"><path d="M4.500 0v9M0 4.500h9" /></svg></div>
      </div>

      <main class="canvas">
        <svg class="sheet" width="1354" height="497" viewBox="6 179 1354 497" fill="none">
          <circle cx="1300.500" cy="261" r="37.500" stroke="#464d58" stroke-width="8" />
          <rect x="1283" y="243" width="36" height="36" fill="#999c9e" />
          <text x="1293" y="265" class="cube" textLength="16" lengthAdjust="spacingAndGlyphs">TOP</text>
          <g class="nsew"><text x="1300.500" y="227">N</text><text x="1300.500" y="306">S</text><text x="1261.500" y="267">W</text><text x="1340.500" y="267">E</text></g>
          <rect x="1277" y="322" width="47" height="17" rx="3" fill="#8c929d" /><text x="1281" y="334" class="wcs">WCS</text>
          <g class="nav">
            <rect x="1324" y="365" width="32" height="212" rx="4" fill="#62676b" stroke="#53585e" />
            <circle cx="1350" cy="370" r="3" /><circle cx="1350" cy="571" r="3" />
            <path d="M1350.500 384.500v10a10.500 10.500 0 1 1-10.500-10.500z" /><circle cx="1340" cy="395" r="6" />
            <path d="M1332 441l-2-6 6 4v-9q2-2 3 0v5-8q2-1 3 0v8-7q2-1 3 0v8l1-6q3-1 3 1l-3 15h-8z" />
            <path d="M1330 456l14 13M1343 456l-13 13" /><path d="M1328 454h5l-5 5zM1345 454v5l-5-5zM1328 471v-5l5 5z" fill="#454c57" /><circle cx="1345" cy="470" r="4.500" /><path d="M1348 473l4 4" stroke-width="2" />
            <path d="M1338 496l2.500-3 2.500 3v18h-4v-18M1329 506q0-4 11-4t11 3-11 4h-8M1335 506l-4 3 4 3" />
            <path d="M1328.500 534.500h6v6h-6zM1336.500 534.500h6v6h-6zM1344.500 534.500h6v6h-6zM1328.500 543.500h16v13h-16z" /><path d="M1334 546l6 4-6 4z" fill="#454c57" />
            <path d="M1338 414h5l-2.500 3zM1338 485h5l-2.500 3zM1338 522h5l-2.500 3z" fill="#454c57" stroke="none" />
          </g>
          <g class="ink">
            <rect v-for="(f, i) in frames" :key="i" :x="f[0] + 0.5" :y="f[1] + 0.5" :width="f[2]" :height="f[3]" />
            <template v-for="(d, i) in drawings" :key="'d' + i">
              <path :d="d.l" /><path :d="d.d" stroke-dasharray="5 4" /><path :d="d.b" fill="#fff" stroke="none" />
            </template>
            <path d="M6.500 179v16.500h279V179M6 200.500h298.500V179" />
            <path d="M1134.500 522.500h31M1172.500 522.500h31.500M1169.500 488v31M1169.500 526v31M1166.500 519.500h6v6h-6z" />
            <path d="M19.500 612v45M24.500 662.500h46M15.500 657.500h9v9h-9zM19.500 657.500v5h5" />
          </g>
          <path d="M21 595l6.500 6.500L34 595M27.500 601.500v6.500M74 648l13 13M87 648l-13 13" stroke="#f4f4f4" />
          <g class="ttl">
            <text x="62" y="249" textLength="140" lengthAdjust="spacingAndGlyphs">Panel Winch Hydrolis Buritan</text>
            <text x="872" y="266" textLength="115" lengthAdjust="spacingAndGlyphs">Panel Turning Gear ME2</text>
            <text x="884" y="475" textLength="115" lengthAdjust="spacingAndGlyphs">Panel Hydrofur Sprinkle</text>
          </g>
          <g class="cadtxt"><text x="460" y="247" textLength="149">PANEL RAMPDOOR BURITAN KIRI</text><text x="460" y="469" textLength="149">PANEL RAMPDOOR BURITAN KIRI</text></g>
          <text x="9" y="197" class="vp" textLength="124">[−][Top][2D Wireframe]</text>
          <path d="M1299 195.500h10" stroke="#f0f0f0" stroke-width="3" />
          <path d="M1320.500 192.500h6v6h-6zM1322 190.500h6.500v6.500" stroke="#e6e6e6" stroke-width="1.700" />
          <path d="M1339.500 190.500l8 8M1347.500 190.500l-8 8" stroke="#f0f0f0" stroke-width="2" />
        </svg>
        <div class="cmdbar">
          <div class="grip"><svg width="6" height="18" stroke="#eee" stroke-width="1.500" stroke-dasharray="1.500 1.500"><path d="M1 0v18M3.500 0v18M6 0v18" /></svg>
            <svg width="10" height="10" stroke="#eee" stroke-width="2"><path d="M1 1l8 8M9 1l-8 8" /></svg><Ic n="wrench" /></div>
          <div class="input"><Ic n="cmd" /><b class="ar k" /><b class="up" /></div>
        </div>
      </main>

      <div class="lower">
        <div class="layouts"><span class="on">Model</span><span>Layout1</span><span>Layout2</span><span class="add"><svg width="8" height="8" stroke="#b4bac3" stroke-width="1.600"><path d="M4 0v8M0 4h8" /></svg></span></div>
        <div class="status">
          <div class="g g1">MODEL</div>
          <div class="g"><i class="c24"><Ic n="grid" /></i><i class="c25"><Ic n="snap" /></i><i class="c15"><b class="ar l" /></i></div>
          <div class="g"><i class="c24"><Ic n="ortho" /></i><i class="c24"><Ic n="polar" /></i><i class="c16"><b class="ar l" /></i><i class="c22"><Ic n="iso" /></i><i class="c16"><b class="ar l" /></i></div>
          <div class="g"><i class="hot"><Ic n="track" /></i><i class="hot"><Ic n="osnap" /></i><i class="c16"><b class="ar l" /></i></div>
          <div class="g g5"><i class="hot"><Ic n="ann1" /></i><i class="c24"><Ic n="ann2" /></i><i class="c24"><Ic n="ann3" /></i><span>1:1</span><i class="c12"><b class="ar l" /></i></div>
          <div class="g"><i class="c24"><Ic n="gear" /></i><i class="c15"><b class="ar l" /></i></div>
          <div class="g near"><i class="c24"><Ic n="plus" /></i></div>
          <div class="g"><i class="c24"><Ic n="iso2" /></i></div>
          <div class="g"><i class="c22"><Ic n="hw" /></i></div>
          <div class="g"><i class="c24"><Ic n="full" /></i><i class="c24"><Ic n="menu" /></i></div>
        </div>
      </div>
    </div>
    <div class="task"><b class="t1" /><b class="t2" /><b class="t3" /></div>
  </div>
</template>

<style>
html, body { margin: 0; overflow: hidden; }
</style>

<style scoped>
.desktop { width: 1366px; height: 732px; box-sizing: border-box; padding: 2px 2px 0; background: linear-gradient(#1a70b4, #1a70b4) 0 23px / 2px 23px no-repeat, #e9edf3; font: 12px/16px "Open Sans", "Noto Sans", sans-serif; color: #f1f2f3; overflow: hidden; }
.window { width: 1362px; height: 726px; box-sizing: border-box; border: 1px solid #1878b4; background: #222933; display: flex; flex-direction: column; }
i { font-style: normal; display: flex; align-items: center; justify-content: center; flex: none; }
b { font-weight: normal; display: block; flex: none; }
svg { display: block; flex: none; }
span { white-space: nowrap; }
.c9 { width: 9px; } .c12 { width: 12px; } .c14 { width: 14px; } .c15 { width: 15px; } .c16 { width: 16px; } .c22 { width: 22px; } .c24 { width: 24px; } .c25 { width: 25px; } .c26 { width: 26px; }
.ar { width: 0; height: 0; border: solid transparent; border-width: 3px 2.5px 0; border-top-color: #dfe1e4; }
.ar.l { border-width: 4px 4px 0; }
.ar.dim { border-top-color: #7b828c; }
.ar.k { border-width: 4px 4px 0; border-top-color: #666; margin-left: 2px; }
.tri { width: 0; height: 0; border: solid transparent; border-width: 4px 4px 0; border-top-color: #d9dbdf; }
.play { border: solid transparent; border-width: 4px 0 4px 4px; border-left-color: #e6e6e6; }
.up { border: solid transparent; border-width: 0 4px 4px; border-bottom-color: #555; }

.head { display: flex; height: 48px; }
.logo { width: 49px; padding: 7px 0 0 11px; box-sizing: border-box; }
.headrows { flex: 1; }
.title { display: flex; height: 30px; align-items: center; }
.title > i, .quick { height: 28px; }
.quick { display: flex; width: 351px; }
.quick i { padding-bottom: 1px; }
.name { width: 425px; display: flex; gap: 13px; letter-spacing: -0.36px; padding-bottom: 4px; }
.search { width: 178px; height: 20px; box-sizing: border-box; background: #444c5e; color: #aeb3bd; font-style: italic; padding: 2px 3px; letter-spacing: -0.58px; margin: 0 0 2px 3px; }
.sign { width: 81px; letter-spacing: -0.2px; }
.cart { margin-left: 4px; }
.sep { width: 1px; height: 17px; background: #414855; }
.wmin { margin-left: 14px; }
.tabs { display: grid; grid-template-columns: 51px 50px 69px 76px 46px 62px 60px 60px 83px 86px 100px 60px; height: 18px; color: #b3b8c0; letter-spacing: -0.1px; }
.tabs span { text-align: center; line-height: 16px; }
.tabs span:nth-child(n+9) { letter-spacing: -0.2px; padding-left: 1px; }
.tabs .on { background: #3b4453; color: #f1f2f3; }
.mini { justify-content: flex-start; gap: 5px; padding: 4px 0 0 19px; height: 8px; }
.mini .box { width: 15px; height: 8px; background: #eceded; display: flex; align-items: center; justify-content: center; }
.mini .up { border-width: 0 3px 3px; }

.ribbon { display: flex; height: 97px; margin-left: 5px; background: #222933; letter-spacing: -0.1px; }
.panel { background: #3b4453; box-sizing: border-box; border-right: 1px solid #29313d; padding-top: 4px; flex: none; display: flex; flex-direction: column; }
.panel .body { height: 75px; display: grid; }
.panel footer { display: flex; align-items: center; justify-content: center; gap: 6px; height: 18px; position: relative; letter-spacing: -0.15px; }
.launch { position: absolute; right: 3px; top: 5px; }
.big { display: flex; flex-direction: column; align-items: center; padding-top: 1px; }
.big span { margin-top: 1px; line-height: 15px; text-align: center; }
.big .ar { margin-top: 3px; }
.smalls { display: grid; grid-template-rows: repeat(3, 24px); }
.smalls i { justify-content: flex-start; gap: 5px; padding-left: 5px; }
.draw { width: 224px; } .draw .body { grid-template-columns: 42px 44px 56px 36px 40px; }
.modify { width: 132px; } .modify .body { grid-template-columns: 28px 32px 36px 35px; grid-template-rows: repeat(3, 24px); }
.modify i { gap: 5px; }
.modify i:nth-child(4n+3) { justify-content: flex-start; padding-left: 3px; }
.modify i:nth-child(4n) { padding-left: 1px; }
.annot { width: 149px; } .annot .body { grid-template-columns: 49px 56px 43px; }
.annot .smalls i { padding-left: 7px; }
.layers { width: 273px; } .layers .body { grid-template-columns: 63px 1fr; }
.combo { box-sizing: border-box; height: 22px; background: #4d5a6d; border: 1px solid #2c3541; display: flex; align-items: center; }
.lay { padding-top: 1px; margin-left: -1px; }
.lay .combo { width: 208px; padding: 0 1px 0 1px; }
.lay .combo svg { margin-right: -1px; }
.lay .sw { width: 12px; height: 12px; background: #fff; border: 1px solid #15191f; margin: 1px 5px 0 4px; }
.lay .combo .ar { margin-left: auto; }
.lgrid { display: grid; grid-template-columns: repeat(5, 24px); grid-template-rows: 24px 24px; padding-top: 2px; align-items: center; justify-items: center; }
.block { width: 80px; } .block .body { grid-template-columns: 43px 36px; }
.block .big span { margin-top: 0; }
.block .smalls i { padding-left: 0; gap: 5px; }
.block .smalls { justify-items: start; margin-left: -1px; }
.props { width: 222px; } .props .body { grid-template-columns: 62px 20px 137px; }
.props .big { padding-left: 2px; }
.props .smalls i { padding-left: 0; }
.combos { display: grid; grid-template-rows: repeat(3, 23.7px); padding: 1px 0 0 1px; }
.combos .combo { width: 136px; padding: 0 1px 0 2px; }
.combos .combo span { flex: 1; letter-spacing: -0.25px; }
.swatch { width: 15px; height: 15px; background: #fff; margin: 0 11px 0 9px; }
.rule { width: 64px; height: 1px; background: #fff; margin-right: 2px; }
.groups { width: 69px; } .groups .body { grid-template-columns: 42px 26px; }
.groups .smalls i { padding: 0; justify-content: center; }
.groups .smalls .sel { box-sizing: border-box; width: 24px; height: 22px; margin: 1px 0 0 1px; border: 1px solid #7cbdee; background: #2d5068; }
.slim { width: 58px; height: 95px; margin: 1px 1px 0 2px; background: #4e5a6c; flex: none; display: flex; flex-direction: column; align-items: center; padding-top: 2px; box-sizing: border-box; letter-spacing: -0.25px; }
.groups + .slim { margin-left: 1px; }
.slim span { margin-top: 1px; flex: 1; }
.slim .tri { margin-bottom: 4px; }
.rest { width: 20px; background: #3b4453; }

.files { display: flex; height: 26px; box-sizing: border-box; border-bottom: 4px solid #3b4453; margin: 5px 0 0 3px; letter-spacing: -0.25px; }
.ftab { width: 130px; height: 22px; margin-left: 16px; padding: 1px 0 0 16px; line-height: 22px; box-sizing: border-box; background: #2b3240; color: #b7bbc3; clip-path: path("M0 22Q5 18 7 8Q9 0 15 0H122Q127 1 130 10V22z"); }
.ftab.on { width: 214px; margin-left: -6px; padding-left: 15px; color: #f1f2f3; background: #3b4453; display: flex; align-items: center; gap: 8px; clip-path: path("M0 22Q5 18 7 8Q9 0 15 0H195Q200 1 204 11Q207 19 213 22z"); letter-spacing: -0.38px; }
.ftab svg { margin-bottom: 2px; }
.fadd { width: 23px; height: 14px; margin: 5px 0 0 1px; background: #2f3643; border-radius: 3px 8px 3px 8px; display: flex; align-items: center; justify-content: center; }

.canvas { height: 497px; padding: 0 3px; background: #21282f; position: relative; flex: none; }
.ink { stroke: #fff; stroke-width: 1; shape-rendering: crispEdges; }
.cube { font: 600 11px "Open Sans", sans-serif; fill: #3f454d; }
.nsew { font: bold 14px "Liberation Sans", sans-serif; fill: #a6a9ad; text-anchor: middle; }
.wcs { font: 11px "Open Sans", sans-serif; fill: #4a505b; }
.nav { stroke: #484f5a; stroke-width: 1; }
.ttl { font: bold 11.5px Roboto, sans-serif; fill: #f6f6f6; }
.cadtxt { font: 9.5px "DejaVu Sans Mono", monospace; fill: #fff; }
.vp { font: 12px "Open Sans", sans-serif; fill: #e8e8e8; }
.cmdbar { position: absolute; left: 274px; top: 471px; width: 812px; height: 25px; display: flex; }
.grip { width: 56px; background: #2c323e; display: flex; align-items: center; padding-left: 4px; box-sizing: border-box; }
.grip svg:nth-child(2) { margin: -3px 12px 0 4px; }
.input { flex: 1; background: #fff; border-radius: 1px; display: flex; align-items: center; padding: 0 3px 0 4px; }
.input .up { margin-left: auto; }

.lower { flex: 1; }
.layouts { display: flex; height: 18px; margin: 0 3px; padding-left: 10px; border-top: 1px solid #454b56; box-sizing: border-box; letter-spacing: -0.1px; }
.layouts span { width: 65px; height: 17px; line-height: 16px; text-align: center; background: #2b323f; color: #b7bbc3; clip-path: polygon(0 0, 100% 0, 96% 30%, 88% 100%, 13% 100%, 6% 70%); box-sizing: border-box; }
.layouts .on { width: 60px; background: #3b4453; color: #fff; font-weight: 700; letter-spacing: -0.3px; padding-left: 1px; }
.layouts .add { width: 23px; display: flex; align-items: center; justify-content: center; margin-left: 3px; }
.status { display: flex; justify-content: flex-end; gap: 3px; height: 24px; margin: 4px 5px 0 0; }
.g { display: flex; background: #3a4352; align-items: center; }
.g i { height: 24px; }
.g1 { width: 47px; justify-content: center; letter-spacing: -0.3px; }
.g span { width: 21px; text-align: center; letter-spacing: -0.5px; }
.g .hot { width: 22px; height: 22px; background: #5a8cc8; margin: 0 2px 0 1px; }
.g5 .hot { margin: 0 1px; }
.g5 .c24:nth-child(2) { width: 23px; }
.near { margin-left: -1px; }
.task { display: flex; height: 4px; margin: 0 -2px; background: #2b362d; }
.t1 { width: 288px; margin-left: 48px; background: #eef1f4; }
.t2 { width: 48px; margin-left: 590px; background: #566058; }
.t3 { width: 47px; margin-left: 1px; background: #b36f30; }
</style>
